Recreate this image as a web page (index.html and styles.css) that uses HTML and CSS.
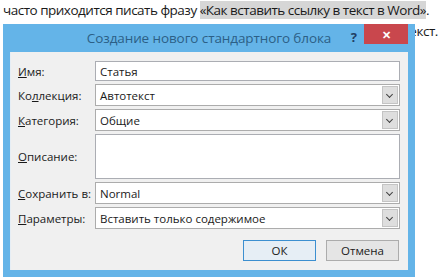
FILE: index.html
```html
<!DOCTYPE html>
<html lang="ru">
<head>
  <meta charset="UTF-8">
  <title>Создание нового стандартного блока</title>
  <link rel="stylesheet" href="styles.css">
</head>
<body>
  <div class="doc">
    <p>часто приходится писать фразу <span class="hl">«Как вставить ссылку в текст в Word»</span>.</p>
    <p class="under">в котором я даю ссылку на статью, поэтому сохраняю ее как автотекст.</p>
  </div>

  <div class="dialog">
    <div class="titlebar">
      <span class="title">Создание нового стандартного блока</span>
      <span class="help">?</span>
      <span class="close">&#x2715;</span>
    </div>
    <div class="body">
      <div class="form">
        <label><u>И</u>мя:</label>
        <div class="field text">Статья</div>

        <label>Ко<u>л</u>лекция:</label>
        <div class="field select">Автотекст<span class="arrow"></span></div>

        <label><u>К</u>атегория:</label>
        <div class="field select">Общие<span class="arrow"></span></div>

        <label><u>О</u>писание:</label>
        <div class="field area"></div>

        <label><u>С</u>охранить в:</label>
        <div class="field select">Normal<span class="arrow"></span></div>

        <label><u>П</u>араметры:</label>
        <div class="field select">Вставить только содержимое<span class="arrow"></span></div>
      </div>
      <div class="buttons">
        <button class="btn default">ОК</button>
        <button class="btn">Отмена</button>
      </div>
    </div>
  </div>
</body>
</html>
```

FILE: styles.css
```css
body {
  margin: 0;
  background: #ffffff;
  font-family: "Open Sans", "Noto Sans", sans-serif;
  overflow: hidden;
}
.doc {
  width: 432px;
  padding-left: 3px;
  font-size: 13.5px;
  letter-spacing: -0.5px;
  color: #1a1a1a;
  white-space: nowrap;
}
.doc p {
  margin: 0;
  line-height: 20px;
}
.doc .under {
  text-align: right;
  padding-top: 1px;
  padding-right: 4px;
}
.hl {
  background: #d6d6d6;
}
.dialog {
  position: absolute;
  left: 3px;
  top: 24px;
  width: 412px;
  background: #64b4e8;
  padding: 0 7px 7px 7px;
  box-sizing: border-box;
  font-family: "Open Sans", "Noto Sans", sans-serif;
  font-size: 11.5px;
  color: #1a1a1a;
}
.titlebar {
  height: 28px;
  position: relative;
  display: flex;
  align-items: center;
  justify-content: center;
}
.title {
  font-size: 13.5px;
  color: #2c5f86;
  letter-spacing: -0.1px;
}
.help {
  position: absolute;
  right: 51px;
  top: 4px;
  font-size: 13px;
  font-weight: bold;
  color: #213f63;
}
.close {
  position: absolute;
  right: 0;
  top: 0;
  width: 44px;
  height: 20px;
  background: #c9474d;
  color: #ffffff;
  font-size: 11px;
  font-weight: bold;
  display: flex;
  align-items: center;
  justify-content: center;
}
.body {
  background: #f0f0f0;
  height: 218px;
  box-sizing: border-box;
  padding: 9px 8px 0 7px;
  border-left: 1px solid #e6eef5;
}
.form {
  display: grid;
  grid-template-columns: 77px 1fr;
  grid-template-rows: 20px 22px 22px 45px 22px 22px;
  row-gap: 3px;
}
.form label {
  display: flex;
  align-items: center;
}
.field {
  background: #ffffff;
  border: 1px solid #abadb3;
  box-sizing: border-box;
  padding: 0 4px;
  display: flex;
  align-items: center;
  position: relative;
}
.select {
  border-color: #acacac;
}
.arrow {
  position: absolute;
  right: 1px;
  top: 1px;
  bottom: 1px;
  width: 16px;
  background: #dedede;
  border: 1px solid #c4c4c4;
  box-sizing: border-box;
}
.arrow::after {
  content: "";
  position: absolute;
  left: 4px;
  top: 5px;
  width: 4px;
  height: 4px;
  border-right: 1.5px solid #404040;
  border-bottom: 1.5px solid #404040;
  transform: rotate(45deg);
}
.buttons {
  display: flex;
  justify-content: flex-end;
  gap: 10px;
  margin-top: 11px;
  padding-right: 1px;
}
.btn {
  width: 73px;
  height: 21px;
  font-family: inherit;
  font-size: 11.5px;
  color: #1a1a1a;
  background: #e5e5e5;
  border: 1px solid #acacac;
  padding: 0;
}
.btn.default {
  border-color: #3c8fd0;
  background: #e6eef5;
}
```
